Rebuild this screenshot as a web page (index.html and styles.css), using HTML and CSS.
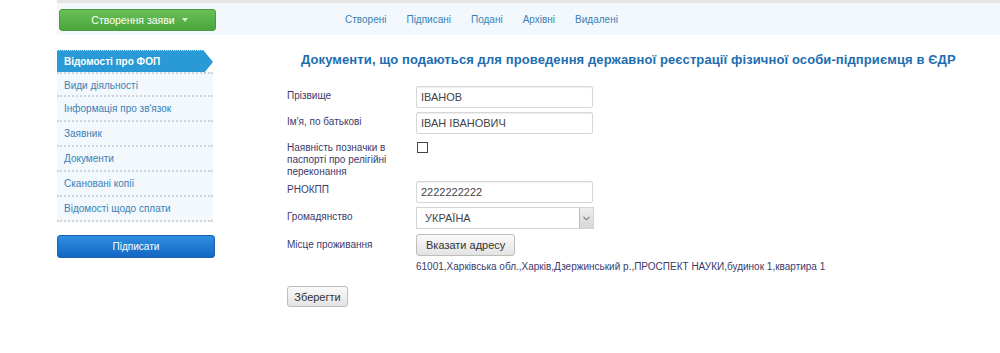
FILE: index.html
```html
<!DOCTYPE html>
<html lang="uk">
<head>
<meta charset="utf-8">
<link rel="stylesheet" href="styles.css">
</head>
<body>
<div class="page">
  <header class="topbar">
    <div class="topleft">
      <button class="btn-green">Створення заяви <span class="caret"></span></button>
    </div>
    <nav class="tabs">
      <a>Створені</a>
      <a>Підписані</a>
      <a>Подані</a>
      <a>Архівні</a>
      <a>Видалені</a>
    </nav>
  </header>
  <div class="main">
    <aside class="side">
      <ul class="menu">
        <li class="active">Відомості про ФОП</li>
        <li>Види діяльності</li>
        <li>Інформація про зв'язок</li>
        <li>Заявник</li>
        <li>Документи</li>
        <li>Скановані копії</li>
        <li>Відомості щодо сплати</li>
      </ul>
      <button class="btn-blue">Підписати</button>
    </aside>
    <section class="content">
      <h1>Документи, що подаються для проведення державної реєстрації фізичної особи-підприємця в ЄДР</h1>
      <div class="form">
        <div class="row r1"><label>Прізвище</label><div class="field"><input type="text" value="ІВАНОВ"></div></div>
        <div class="row r2"><label>Ім'я, по батькові</label><div class="field"><input type="text" value="ІВАН ІВАНОВИЧ"></div></div>
        <div class="row r3"><label>Наявність позначки в паспорті про релігійні переконання</label><div class="field"><span class="check"></span></div></div>
        <div class="row r4"><label>РНОКПП</label><div class="field"><input type="text" value="2222222222"></div></div>
        <div class="row r5"><label>Громадянство</label><div class="field"><div class="select"><span>УКРАЇНА</span><span class="sel-btn"><svg width="7" height="5" viewBox="0 0 7 5"><path d="M0.5 0.8 L3.5 3.8 L6.5 0.8" fill="none" stroke="#777" stroke-width="1.1"/></svg></span></div></div></div>
        <div class="row r6"><label>Місце проживання</label><div class="field"><button class="btn-gray">Вказати адресу</button><div class="addr">61001,Харківська обл.,Харків,Дзержинський р.,ПРОСПЕКТ НАУКИ,будинок 1,квартира 1</div></div></div>
        <div class="save"><button class="btn-gray small">Зберегти</button></div>
      </div>
    </section>
  </div>
</div>
</body>
</html>
```

FILE: styles.css
```css
* { box-sizing: border-box; }
html, body { margin: 0; padding: 0; background: #fff; }
body { font-family: "Liberation Sans", Arial, sans-serif; font-size: 10px; color: #333; width: 1000px; height: 353px; overflow: hidden; }
.page { padding-left: 57px; }
.topbar { display: flex; align-items: center; height: 35px; background: #f2f8fc; border-top: 3px solid #e6e6e6; }
.topleft { width: 288px; padding-left: 2px; }
.btn-green { width: 157px; height: 22px; border: 1px solid #4c9a3e; border-radius: 3px; background: linear-gradient(#69c057, #48a53b); color: #fff; font-family: "Liberation Sans", Arial, sans-serif; font-size: 10.5px; display: flex; align-items: center; justify-content: center; gap: 7px; padding: 0 0 0 4px; margin-top: 1px; }
.caret { width: 0; height: 0; border-left: 3px solid transparent; border-right: 3px solid transparent; border-top: 4px solid #d8f0d0; margin-top: 1px; }
.tabs { display: flex; gap: 20px; padding-top: 1px; }
.tabs a { color: #3b7fb6; font-size: 10px; }
.main { display: flex; padding-top: 15px; }
.side { width: 160px; }
.menu { list-style: none; margin: 0; padding: 0; width: 156px; }
.menu li { height: 25px; line-height: 23px; padding-left: 7px; color: #3b7fb6; background: #f2f8fc; border-bottom: 2px dotted #cfd4d9; font-size: 10px; }
.menu li.active { background: #2a9ad6; color: #fff; font-weight: bold; position: relative; width: 147px; height: 22px; line-height: 21px; border-bottom: none; margin-bottom: 0; border-top: 1px dotted #c9ced3; }
.menu li.active::after { content: ""; position: absolute; right: -9px; top: 0; border-top: 11px solid transparent; border-bottom: 11px solid transparent; border-left: 9px solid #2a9ad6; }
.menu li.active + li { border-top: 2px dotted #cfd4d9; height: 25px; line-height: 23px; }
.btn-blue { margin-top: 13px; width: 158px; height: 23px; border: 1px solid #1a62b0; border-radius: 3px; background: linear-gradient(#2d8fe0, #1367c4); color: #fff; font-family: "Liberation Sans", Arial, sans-serif; font-size: 10px; }
.content { width: 700px; padding-left: 70px; }
h1 { margin: 2px 0 0 0; font-size: 13px; font-weight: bold; color: #1d6db0; white-space: nowrap; letter-spacing: 0.1px; padding-left: 14px; }
.form { margin-top: 19px; }
.row { display: flex; }
.row label { width: 129px; color: #3d3a6b; line-height: 12px; padding-top: 4px; font-size: 10px; }
.field { flex: none; }
input[type=text] { width: 177px; height: 22px; border: 1px solid #d7d7d7; border-radius: 2px; padding: 0 4px; font-family: "Liberation Sans", Arial, sans-serif; font-size: 11px; color: #444; background: #fff; box-shadow: inset 0 1px 1px #eee; }
.r1 { height: 26px; }
.r2 { height: 30px; }
.r3 { height: 39px; }
.r3 label { padding-top: 0; }
.check { display: block; width: 11px; height: 11px; border: 1px solid #444; background: #fff; margin-top: 0; margin-left: 1px; }
.r4 { height: 26px; }
.r4 label { padding-top: 3px; }
.r5 { height: 27px; }
.r5 label { padding-top: 4px; }
.select { width: 178px; height: 22px; border: 1px solid #d4d4d4; display: flex; align-items: center; justify-content: space-between; font-size: 11px; color: #444; padding-left: 8px; background: #fff; }
.sel-btn { width: 14px; height: 20px; background: linear-gradient(#eee, #d6d6d6); border-left: 1px solid #bbb; display: flex; align-items: center; justify-content: center; }
.r6 label { padding-top: 5px; }
.btn-gray { height: 22px; padding: 0 9px; border: 1px solid #bdbdbd; border-radius: 3px; background: linear-gradient(#fafafa, #e3e3e3); font-family: "Liberation Sans", Arial, sans-serif; font-size: 11px; color: #333; }
.addr { margin-top: 5px; color: #3d3a6b; white-space: nowrap; font-size: 10px; }
.save { margin-top: 14px; }
.btn-gray.small { width: 61px; padding: 0; height: 21px; }
```
